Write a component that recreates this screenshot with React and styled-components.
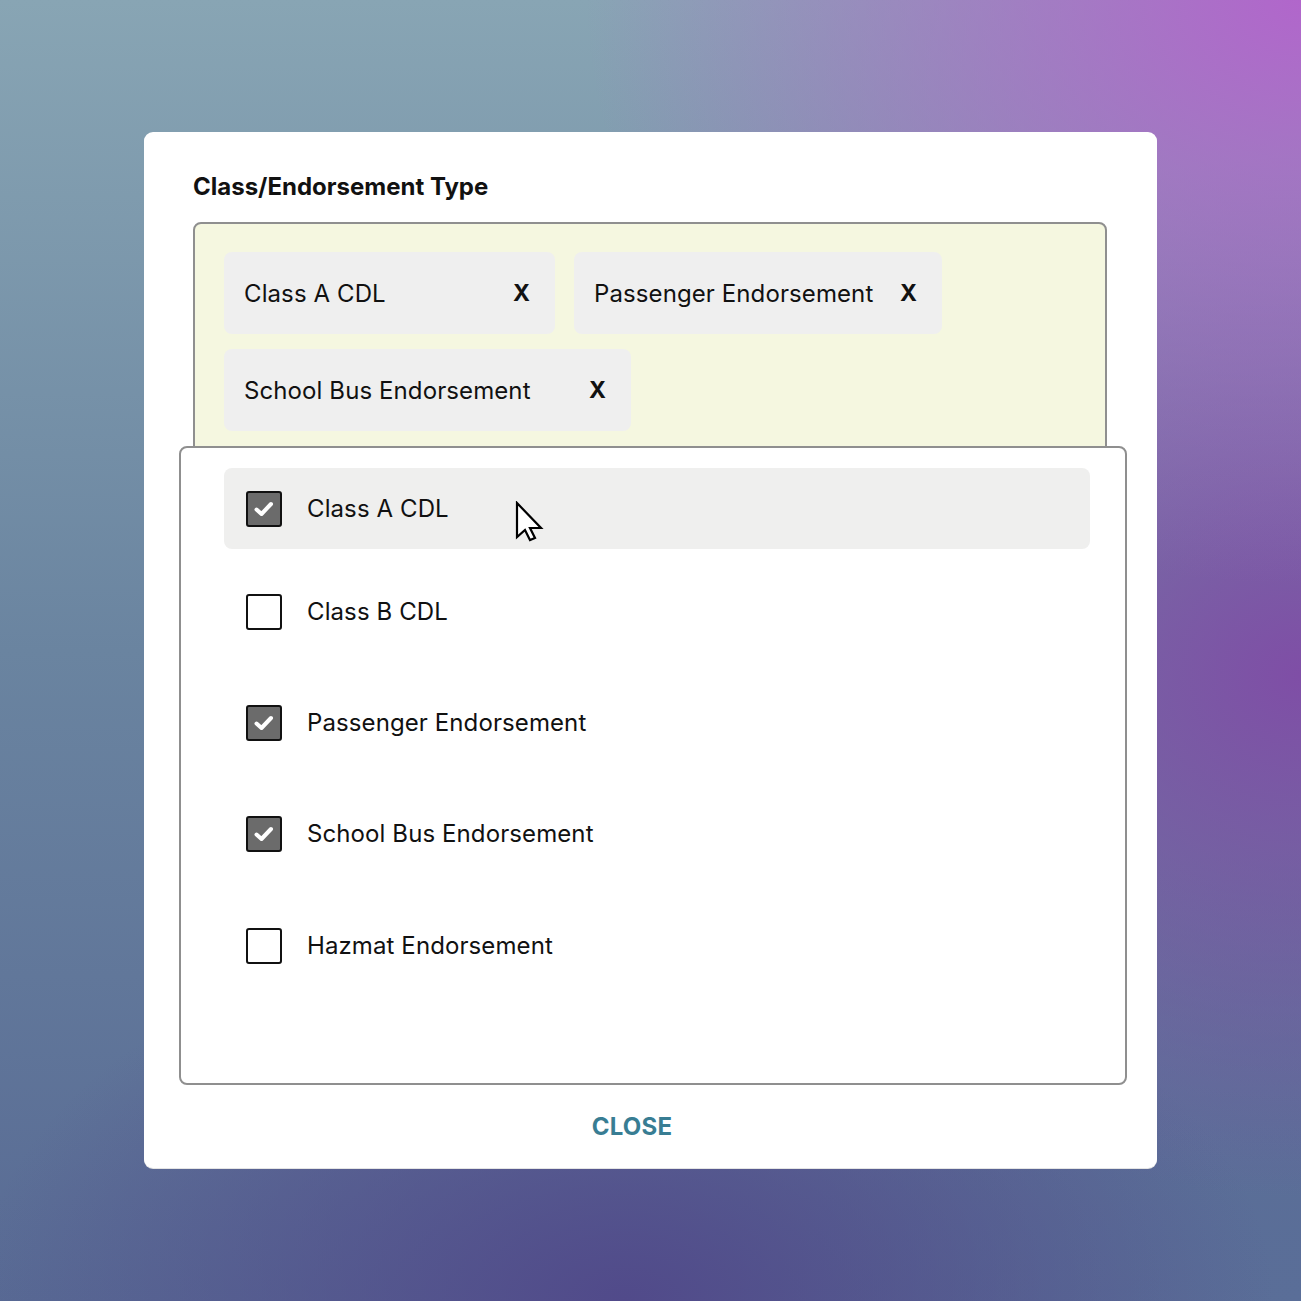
import React from "react";
import styled, { createGlobalStyle } from "styled-components";

const selected = ["Class A CDL", "Passenger Endorsement", "School Bus Endorsement"];
const chipWidths = { "Class A CDL": 331, "Passenger Endorsement": 368, "School Bus Endorsement": 407 };

const options = [
  { label: "Class A CDL", checked: true, hover: true },
  { label: "Class B CDL", checked: false },
  { label: "Passenger Endorsement", checked: true },
  { label: "School Bus Endorsement", checked: true },
  { label: "Hazmat Endorsement", checked: false },
];

const GlobalStyle = createGlobalStyle`
  * { box-sizing: border-box; }
  html, body { margin: 0; padding: 0; }
  body {
    font-family: Inter, "Noto Sans", "Liberation Sans", sans-serif;
    color: #111;
  }
`;

const Page = styled.div`
  width: 1301px;
  height: 1301px;
  padding-top: 132px;
  padding-left: 144px;
  background:
    radial-gradient(ellipse 55% 45% at 100% 0%, #b166cb 0%, rgba(177, 102, 203, 0) 100%),
    radial-gradient(ellipse 45% 40% at 100% 52%, #7f4ea6 0%, rgba(127, 78, 166, 0) 100%),
    radial-gradient(ellipse 50% 30% at 48% 100%, #514a8a 0%, rgba(81, 74, 138, 0) 100%),
    radial-gradient(ellipse 40% 35% at 100% 100%, #5a6e98 0%, rgba(90, 110, 152, 0) 100%),
    linear-gradient(180deg, #88a5b4 0%, #6a84a0 50%, #586a94 100%);
`;

const Card = styled.div`
  width: 1013px;
  height: 1036px;
  background: #fff;
  border-radius: 9px;
  padding: 40px 50px 0 49px;
  display: flex;
  flex-direction: column;
  box-shadow: 0 1px 0 #e4e4e4;
`;

const Title = styled.h2`
  margin: 0 0 20px;
  font-size: 24px;
  font-weight: 700;
  letter-spacing: 0;
  line-height: 30px;
`;

const ChipBox = styled.div`
  width: 914px;
  border: 2px solid #8f8f8f;
  border-radius: 8px;
  background: #f5f7e0;
  padding: 28px 0 26px 29px;
  display: flex;
  flex-wrap: wrap;
  gap: 15px 19px;
`;

const Chip = styled.div`
  width: ${(p) => p.$width}px;
  height: 82px;
  background: #efefef;
  border-radius: 8px;
  padding: 0 25px 0 20px;
  display: flex;
  align-items: center;
  font-size: 24px;
  letter-spacing: 0.1px;
`;

const ChipText = styled.span`
  flex: 1;
`;

const ChipClose = styled.span`
  font-weight: 700;
  font-size: 23px;
`;

const Dropdown = styled.div`
  position: relative;
  width: 948px;
  height: 639px;
  margin: -13px 0 0 -14px;
  background: #fff;
  border: 2px solid #8f8f8f;
  border-radius: 8px;
  padding: 20px 35px 0 43px;
  display: flex;
  flex-direction: column;
  gap: 30px;
`;

const Option = styled.div`
  position: relative;
  height: 81px;
  border-radius: 8px;
  background: ${(p) => (p.$hover ? "#efefee" : "transparent")};
  margin-bottom: ${(p) => (p.$hover ? "-8px" : "0")};
  padding-left: 22px;
  display: flex;
  align-items: center;
  gap: 25px;
  font-size: 24px;
  letter-spacing: 0.1px;

  &:last-child {
    margin-top: 1px;
  }
`;

const Box = styled.span`
  width: 36px;
  height: 36px;
  border: 2px solid #111;
  border-radius: 3px;
  background: ${(p) => (p.$checked ? "#6b6b6b" : "#fff")};
  display: flex;
  align-items: center;
  justify-content: center;
  flex-shrink: 0;
`;

const Cursor = styled.svg`
  position: absolute;
  left: 291px;
  top: 33px;
`;

const Footer = styled.div`
  flex: 1;
  display: flex;
  align-items: center;
  justify-content: center;
  padding: 0 36px 0 0;
`;

const CloseButton = styled.button`
  border: none;
  background: none;
  font-family: inherit;
  font-size: 24px;
  font-weight: 700;
  color: #387d93;
  letter-spacing: 0.2px;
  cursor: pointer;
  padding: 0;
`;

const Check = () => (
  <svg width="26" height="26" viewBox="0 0 26 26">
    <path d="M5.5 13.5 L10.5 18 L20 8" fill="none" stroke="#fff" strokeWidth="4" strokeLinecap="round" strokeLinejoin="round" />
  </svg>
);

const App = () => {
  return (
    <>
      <GlobalStyle />
      <Page>
        <Card>
          <Title>Class/Endorsement Type</Title>
          <ChipBox>
            {selected.map((s) => (
              <Chip key={s} $width={chipWidths[s]}>
                <ChipText>{s}</ChipText>
                <ChipClose>X</ChipClose>
              </Chip>
            ))}
          </ChipBox>
          <Dropdown>
            {options.map((o) => (
              <Option key={o.label} $hover={o.hover}>
                <Box $checked={o.checked}>{o.checked && <Check />}</Box>
                {o.label}
                {o.hover && (
                  <Cursor width="30" height="42" viewBox="0 0 30 42">
                    <path
                      d="M2 2 L2 36 L10 29 L15 39 L20 37 L15 27 L26 27 Z"
                      fill="#fff"
                      stroke="#000"
                      strokeWidth="2.2"
                      strokeLinejoin="miter"
                    />
                  </Cursor>
                )}
              </Option>
            ))}
          </Dropdown>
          <Footer>
            <CloseButton>CLOSE</CloseButton>
          </Footer>
        </Card>
      </Page>
    </>
  );
};

export default App;
